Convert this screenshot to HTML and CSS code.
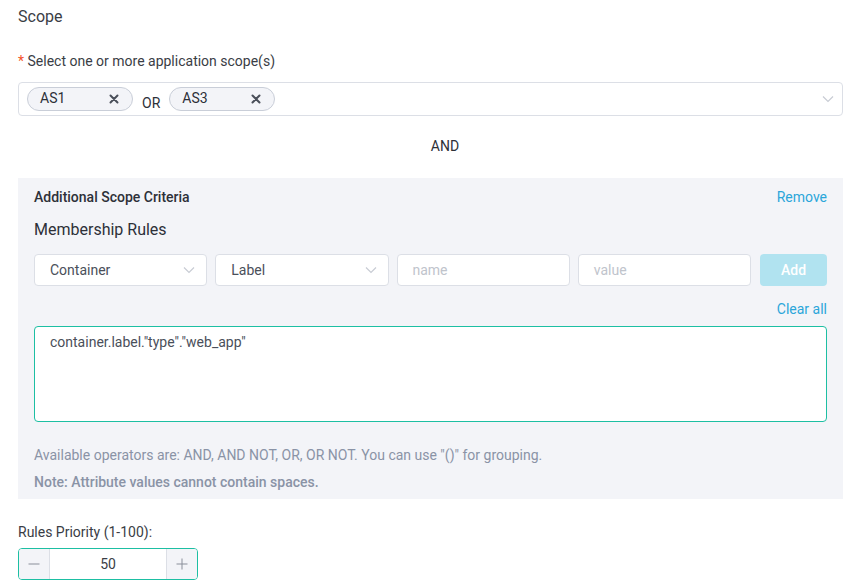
FILE: index.html
```html
<!DOCTYPE html>
<html>
<head>
<meta charset="utf-8">
<link rel="stylesheet" href="styles.css">
</head>
<body>
<div class="page">
  <div class="title">Scope</div>
  <div class="label"><span class="req">*</span> Select one or more application scope(s)</div>
  <div class="multiselect">
    <span class="tag"><span class="tag-text">AS1</span><svg class="tag-x" width="10" height="10" viewBox="0 0 10 10"><path d="M1.5 1.5 L8.5 8.5 M8.5 1.5 L1.5 8.5" stroke="#4a4f5a" stroke-width="2" stroke-linecap="round"/></svg></span>
    <span class="or">OR</span>
    <span class="tag"><span class="tag-text">AS3</span><svg class="tag-x" width="10" height="10" viewBox="0 0 10 10"><path d="M1.5 1.5 L8.5 8.5 M8.5 1.5 L1.5 8.5" stroke="#4a4f5a" stroke-width="2" stroke-linecap="round"/></svg></span>
    <svg class="chev ms-chev" width="12" height="8" viewBox="0 0 12 8"><path d="M1 1.5 L6 6.5 L11 1.5" fill="none" stroke="#c8ccd4" stroke-width="1.2"/></svg>
  </div>
  <div class="and">AND</div>
  <div class="panel">
    <div class="panel-head">
      <span class="panel-title">Additional Scope Criteria</span>
      <span class="link">Remove</span>
    </div>
    <div class="subtitle">Membership Rules</div>
    <div class="rule-row">
      <div class="field select"><span>Container</span><svg class="chev" width="12" height="8" viewBox="0 0 12 8"><path d="M1 1.5 L6 6.5 L11 1.5" fill="none" stroke="#c8ccd4" stroke-width="1.2"/></svg></div>
      <div class="field select"><span>Label</span><svg class="chev" width="12" height="8" viewBox="0 0 12 8"><path d="M1 1.5 L6 6.5 L11 1.5" fill="none" stroke="#c8ccd4" stroke-width="1.2"/></svg></div>
      <div class="field placeholder">name</div>
      <div class="field placeholder">value</div>
      <div class="add-btn">Add</div>
    </div>
    <div class="clear-row"><span class="link">Clear all</span></div>
    <div class="textarea">container.label."type"."web_app"</div>
    <div class="help">Available operators are: AND, AND NOT, OR, OR NOT. You can use "()" for grouping.</div>
    <div class="note">Note: Attribute values cannot contain spaces.</div>
  </div>
  <div class="prio-label">Rules Priority (1-100):</div>
  <div class="stepper">
    <div class="step-btn minus"><svg width="12" height="12" viewBox="0 0 12 12"><path d="M0.5 6 H11.5" stroke="#8a8f9a" stroke-width="1"/></svg></div>
    <div class="step-val">50</div>
    <div class="step-btn plus"><svg width="12" height="12" viewBox="0 0 12 12"><path d="M0.5 6 H11.5 M6 0.5 V11.5" stroke="#8a8f9a" stroke-width="1"/></svg></div>
  </div>
</div>
</body>
</html>
```
FILE: styles.css
```css
* { box-sizing: border-box; }
html, body { margin: 0; padding: 0; background: #fff; }
body {
  font-family: Roboto, "Liberation Sans", Arial, sans-serif;
  font-size: 14px;
  color: #3a3d45;
}
.page {
  padding: 6px 8px 0 18px;
}
.title {
  font-size: 16px;
  line-height: 22px;
  color: #3a3d45;
}
.label {
  margin-top: 23px;
  line-height: 20px;
}
.req { color: #f5542a; }
.multiselect {
  margin-top: 11px;
  height: 34px;
  border: 1px solid #dcdfe6;
  border-radius: 4px;
  display: flex;
  align-items: center;
  padding-left: 8px;
  padding-right: 8px;
}
.tag {
  display: flex;
  align-items: center;
  justify-content: space-between;
  width: 106px;
  height: 24px;
  border: 1px solid #c9ced8;
  border-radius: 12px;
  background: #f3f4f8;
  padding: 0 13px 1px 12px;
  color: #2d3038;
}
.tag-text { line-height: 20px; margin-top: -2px; }
.tag-x { display: block; }
.or {
  margin: 7px 9px 0 9px;
  line-height: 20px;
  color: #2d3038;
}
.ms-chev { margin-left: auto; margin-right: 0; }
.chev { display: block; }
.and {
  margin-top: 20px;
  text-align: center;
  line-height: 20px;
  color: #2d3038;
  padding-left: 29px;
}
.panel {
  margin-top: 22px;
  background: #f3f4f8;
  padding: 9px 16px 7px 16px;
}
.panel-head {
  display: flex;
  justify-content: space-between;
  line-height: 20px;
}
.panel-title { font-weight: 500; color: #2d3038; }
.link { color: #2ba6da; }
.subtitle {
  margin-top: 12px;
  font-size: 16px;
  line-height: 22px;
  color: #2d3038;
}
.rule-row {
  margin-top: 13px;
  display: flex;
  gap: 8px;
  height: 32px;
}
.field {
  flex: 1 1 0;
  background: #fff;
  border: 1px solid #dcdfe6;
  border-radius: 4px;
  display: flex;
  align-items: center;
  padding: 0 11px 0 15px;
  line-height: 20px;
}
.select { justify-content: space-between; color: #4a4f5a; }
.placeholder { color: #c0c4cc; }
.add-btn {
  flex: 0 0 67px;
  margin-left: 1px;
  background: #b1e3f0;
  color: #fff;
  border-radius: 4px;
  display: flex;
  align-items: center;
  justify-content: center;
  font-weight: 500;
}
.clear-row {
  margin-top: 13px;
  line-height: 20px;
  text-align: right;
}
.textarea {
  margin-top: 7px;
  height: 96px;
  background: #fff;
  border: 1px solid #1dbfa3;
  border-radius: 4px;
  padding: 5px 15px;
  line-height: 20px;
  color: #4a4f5a;
}
.help {
  margin-top: 23px;
  line-height: 20px;
  color: #8a93a6;
}
.note {
  margin-top: 7px;
  line-height: 20px;
  color: #8a93a6;
  font-weight: 500;
}
.prio-label {
  margin-top: 23px;
  line-height: 20px;
  color: #3a3d45;
}
.stepper {
  margin-top: 6px;
  width: 180px;
  height: 32px;
  border: 1px solid #1dbfa3;
  border-radius: 4px;
  display: flex;
  overflow: hidden;
}
.step-btn {
  width: 31px;
  background: #f3f4f8;
  display: flex;
  align-items: center;
  justify-content: center;
}
.minus { border-right: 1px solid #dcdfe6; }
.plus { border-left: 1px solid #dcdfe6; }
.step-val {
  flex: 1;
  display: flex;
  align-items: center;
  justify-content: center;
  color: #3a3d45;
}
```
